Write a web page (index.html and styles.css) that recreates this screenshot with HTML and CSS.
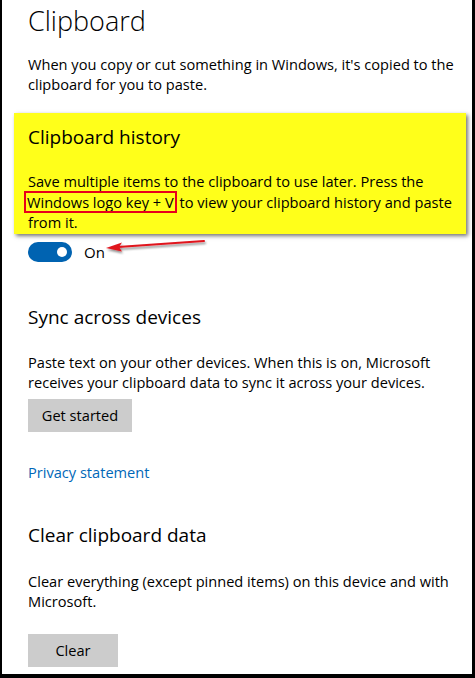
FILE: index.html
```html
<!DOCTYPE html>
<html lang="en">
<head>
<meta charset="utf-8">
<title>Clipboard</title>
<link rel="stylesheet" href="styles.css">
</head>
<body>
<div class="frame">
  <h1 class="title">Clipboard</h1>
  <p class="text intro">When you copy or cut something in Windows, it's copied to the clipboard for you to paste.</p>

  <section class="highlight">
    <h2 class="heading">Clipboard history</h2>
    <p class="text hl-text">Save multiple items to the clipboard to use later. Press the <span class="boxed">Windows logo key + V</span> to view your clipboard history and paste from it.</p>
  </section>

  <div class="toggle-row">
    <span class="toggle"><span class="knob"></span></span>
    <span class="toggle-label">On</span>
    <svg class="arrow" width="110" height="24" viewBox="0 0 110 24">
      <defs>
        <filter id="sh" x="-20%" y="-50%" width="140%" height="200%">
          <feDropShadow dx="1" dy="2" stdDeviation="1.2" flood-color="#000" flood-opacity="0.45"/>
        </filter>
      </defs>
      <g filter="url(#sh)">
        <line x1="14" y1="11" x2="100" y2="5" stroke="#e0141e" stroke-width="2" stroke-linecap="round"/>
        <polygon points="2,12 18,6.5 15,11 18,15.5" fill="#e0141e"/>
      </g>
    </svg>
  </div>

  <h2 class="heading sync">Sync across devices</h2>
  <p class="text sync-text">Paste text on your other devices. When this is on, Microsoft receives your clipboard data to sync it across your devices.</p>
  <button class="btn get-started">Get started</button>
  <a class="link" href="#">Privacy statement</a>

  <h2 class="heading clear-h">Clear clipboard data</h2>
  <p class="text clear-text">Clear everything (except pinned items) on this device and with Microsoft.</p>
  <button class="btn clear-btn">Clear</button>
</div>
</body>
</html>
```
FILE: styles.css
```css
html, body {
  margin: 0;
  padding: 0;
  background: #fff;
}
body {
  font-family: "Open Sans", "Noto Sans", sans-serif;
  color: #000;
}
.frame {
  box-sizing: border-box;
  width: 475px;
  height: 678px;
  border-left: 2px solid #000;
  border-right: 3px solid #000;
  border-bottom: 4px solid #000;
  padding-left: 26px;
  padding-right: 10px;
  overflow: hidden;
  display: flex;
  flex-direction: column;
  align-items: flex-start;
}
.title {
  margin: 3px 0 0;
  font-size: 27px;
  font-weight: 300;
  line-height: 36px;
}
.text {
  margin: 0;
  font-size: 14.6px;
  line-height: 20px;
}
.intro {
  margin-top: 15px;
}
.highlight {
  align-self: stretch;
  margin: 19px -4px 0 -14px;
  padding: 10px 10px 1px 14px;
  background: #ffff1a;
  box-shadow: 2px 2px 4px rgba(0,0,0,0.55);
}
.heading {
  margin: 0;
  font-size: 19px;
  font-weight: 400;
  line-height: 28px;
}
.hl-text {
  margin-top: 20px;
  line-height: 20.5px;
}
.boxed {
  outline: 2px solid #e8001c;
  outline-offset: -1px;
  padding: 0 2px;
  margin-left: -3px;
}
.toggle-row {
  position: relative;
  display: flex;
  align-items: center;
  gap: 12px;
  margin-top: 8px;
}
.toggle {
  box-sizing: border-box;
  width: 44px;
  height: 20px;
  border-radius: 10px;
  background: #0063b1;
  display: flex;
  align-items: center;
  justify-content: flex-end;
  padding-right: 5px;
}
.knob {
  width: 10px;
  height: 10px;
  border-radius: 50%;
  background: #fff;
}
.toggle-label {
  font-size: 15px;
  line-height: 20px;
}
.arrow {
  position: absolute;
  left: 76px;
  top: -6px;
}
.sync {
  margin-top: 41px;
}
.sync-text {
  margin-top: 21px;
}
.btn {
  border: 0;
  margin: 7px 0 0;
  background: #cccccc;
  font-family: inherit;
  font-size: 14.6px;
  color: #000;
  height: 33px;
  padding: 0 10px;
}
.get-started {
  width: 104px;
}
.clear-btn {
  width: 90px;
  margin-top: 23px;
}
.link {
  margin-top: 30px;
  font-size: 14.6px;
  line-height: 20px;
  color: #0067b8;
  text-decoration: none;
}
.clear-h {
  margin-top: 39px;
}
.clear-text {
  margin-top: 22px;
}
```
